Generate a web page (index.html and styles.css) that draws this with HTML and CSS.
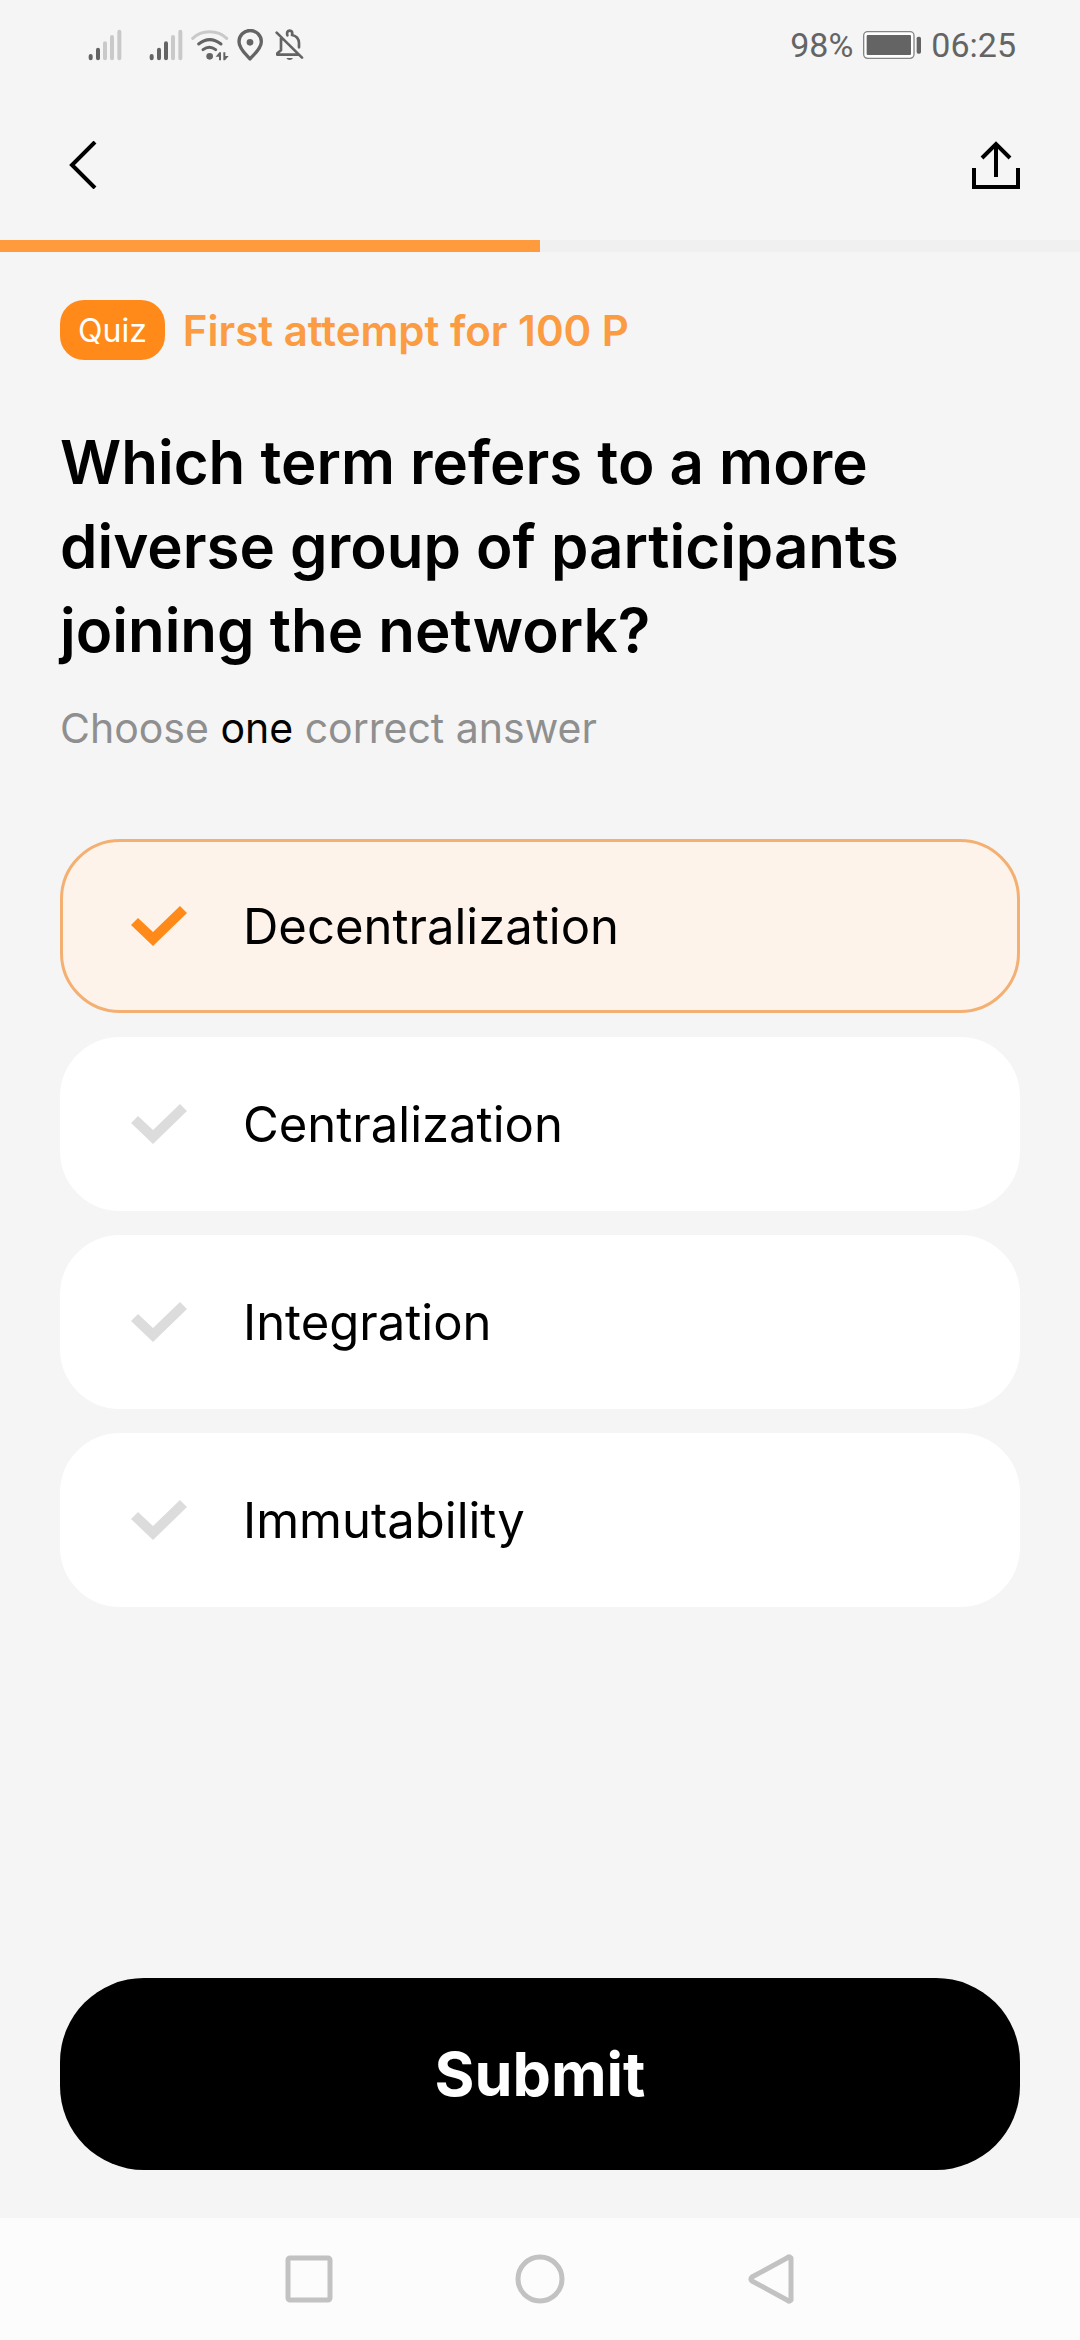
FILE: index.html
```html
<!DOCTYPE html>
<html lang="en">
<head>
<meta charset="utf-8">
<meta name="viewport" content="width=device-width, initial-scale=1">
<title>Quiz</title>
<link rel="stylesheet" href="styles.css">
</head>
<body>
<div class="status-bar">
  <div class="status-icons">
    <svg class="signal" width="34" height="32" viewBox="54 57 102 96" fill="none" stroke="#646464" stroke-width="12" stroke-linecap="round" aria-hidden="true"><path d="M62 138v7M84 119v26"/><path stroke="#c9c9c9" d="M105 100v45M126 81v64M148 65v80"/></svg>
    <svg class="signal" width="34" height="32" viewBox="237 57 102 96" fill="none" stroke="#646464" stroke-width="12" stroke-linecap="round" aria-hidden="true"><path d="M245 138v7M267 119v26M288 100v45"/><path stroke="#c9c9c9" d="M309 81v64M331 65v80"/></svg>
    <svg width="38" height="32" viewBox="363 57 114 96" fill="none" stroke="#646464" stroke-width="9" stroke-linecap="round" aria-hidden="true"><path stroke="#c9c9c9" d="M368 85Q388 65 419 65T470 85"/><path d="M386 102Q419 76 453 102M399 119Q418 105 437 119"/><circle cx="419" cy="139" r="10" fill="#646464" stroke="none"/><path fill="#646464" stroke="none" d="M437 140 448 127h5v24h-6v-11zM460 127h6v11h10l-11 13h-5z"/></svg>
    <svg width="26" height="32" viewBox="501 57 78 96" fill="none" stroke="#646464" stroke-width="10" stroke-linejoin="round" aria-hidden="true"><path d="M540 147C529 134 507 116 507 95a33 33 0 0 1 67 0C574 116 551 134 540 147z"/><circle cx="540" cy="97" r="10" fill="#646464" stroke="none"/></svg>
    <svg class="muted-bell" width="29" height="32" viewBox="613 57 87 96" fill="none" stroke="#646464" stroke-width="8" stroke-linejoin="round" stroke-linecap="round" aria-hidden="true"><path d="M618 68 694 143M631 84V121L620 130V134H682M650 76Q647 62 657 62 667 62 664 75 684 79 685 99V112"/><path fill="#646464" stroke="none" d="M647 144h20q-3 6-10 6t-10-6z"/></svg>
  </div>
  <div class="status-info">
    <span>98%</span>
    <svg width="58" height="28" viewBox="276 64 174 84" aria-hidden="true"><rect x="278" y="66" width="151" height="80" rx="12" fill="#fff" stroke="#858585" stroke-width="4"/><rect x="287" y="76" width="133" height="60" rx="3" fill="#646464"/><rect x="437" y="81" width="13" height="51" rx="5" fill="#646464"/></svg>
    <span>06:25</span>
  </div>
</div>

<header class="app-bar">
  <button class="icon-button" type="button" aria-label="Back">
    <svg width="48" height="48" viewBox="0 0 48 48" fill="none" stroke="#000" stroke-width="4"><path d="M35 1 12 24 35 47"/></svg>
  </button>
  <button class="icon-button" type="button" aria-label="Share">
    <svg width="48" height="48" viewBox="0 0 48 48" fill="none" stroke="#000" stroke-width="4"><path d="M2 27V46H46V27M24 36V3M10 17 24 3 38 17"/></svg>
  </button>
</header>
<progress class="progress" value="50" max="100" aria-label="Quiz progress"></progress>

<form class="quiz">
  <div class="meta">
    <span class="badge">Quiz</span>
    <span class="attempt">First attempt for 100 P</span>
  </div>
  <h1 class="question">Which term refers to a more diverse group of participants joining the network?</h1>
  <p class="hint">Choose <strong>one</strong> correct answer</p>
  <div class="options" role="radiogroup" aria-label="Answers">
    <label class="option"><input type="radio" name="answer" checked><span>Decentralization</span></label>
    <label class="option"><input type="radio" name="answer"><span>Centralization</span></label>
    <label class="option"><input type="radio" name="answer"><span>Integration</span></label>
    <label class="option"><input type="radio" name="answer"><span>Immutability</span></label>
  </div>
  <button class="submit" type="button">Submit</button>
</form>

<nav class="system-nav" aria-label="System">
  <button class="icon-button" type="button" aria-label="Recent apps">
    <svg width="50" height="50" viewBox="0 0 50 50" fill="none" stroke="#c2c2c2" stroke-width="5"><rect x="4" y="4" width="42" height="42" rx="2"/></svg>
  </button>
  <button class="icon-button" type="button" aria-label="Home">
    <svg width="50" height="50" viewBox="0 0 50 50" fill="none" stroke="#c2c2c2" stroke-width="5"><circle cx="25" cy="25" r="22"/></svg>
  </button>
  <button class="icon-button" type="button" aria-label="Back">
    <svg width="50" height="50" viewBox="0 0 50 50" fill="none" stroke="#c2c2c2" stroke-width="5" stroke-linejoin="round"><path d="M45 4V46Q43 48 41 46L6 27Q4 25 6 23L41 4Q43 2 45 4z"/></svg>
  </button>
</nav>
</body>
</html>
```
FILE: styles.css
```css
* {
  box-sizing: border-box;
}

body {
  display: flex;
  flex-direction: column;
  min-height: 100vh;
  margin: 0;
  background: #f5f5f5;
  color: #000;
  font-family: Inter, "Liberation Sans", sans-serif;
}

svg {
  display: block;
}

.icon-button {
  padding: 0;
  border: 0;
  background: none;
}

.status-bar {
  display: flex;
  align-items: center;
  justify-content: space-between;
  height: 90px;
  padding: 0 64px 0 88px;
  color: #646464;
  font-family: Roboto, sans-serif;
  font-size: 34px;
}

.status-icons {
  display: flex;
  align-items: center;
  gap: 8px;
}

.signal + .signal {
  margin-left: 19px;
}

.muted-bell {
  margin-left: 4px;
}

.status-info {
  display: flex;
  align-items: center;
  gap: 10px;
}

.app-bar {
  display: flex;
  align-items: center;
  justify-content: space-between;
  height: 150px;
  padding: 0 60px;
}

.progress {
  display: block;
  width: 100%;
  height: 12px;
  border: 0;
  appearance: none;
  background: #f0f0f0;
}

.progress::-webkit-progress-bar {
  background: #f0f0f0;
}

.progress::-webkit-progress-value {
  background: #ff9b3d;
}

.quiz {
  display: flex;
  flex: 1;
  flex-direction: column;
  padding: 48px 60px;
}

.meta {
  display: flex;
  align-items: center;
  gap: 18px;
}

.badge {
  padding: 2px 18px 0;
  border-radius: 24px;
  background: #ff8a1a;
  color: #fff;
  font-size: 32px;
  line-height: 58px;
}

.attempt {
  padding-top: 2px;
  color: #fb9b42;
  font-size: 42px;
  font-weight: 600;
  line-height: 58px;
}

.question {
  margin: 60px 0 0;
  font-size: 60px;
  font-weight: 600;
  line-height: 84px;
}

.hint {
  margin: 26px 0 0;
  color: #8f8f8f;
  font-size: 41px;
  line-height: 60px;
}

.hint strong {
  color: #000;
  font-weight: 400;
}

.options {
  display: grid;
  gap: 24px;
  margin-top: 81px;
}

.option {
  display: flex;
  align-items: center;
  gap: 56px;
  height: 174px;
  padding: 0 68px;
  border: 3px solid #fff;
  border-radius: 60px;
  background: #fff;
  font-size: 49px;
}

.option:has(:checked) {
  border-color: #f4b072;
  background: #fef3ea;
}

.option input {
  width: 56px;
  height: 40px;
  margin: 0;
  appearance: none;
  background: #dcdcdc;
  clip-path: polygon(0 19px, 7px 12px, 22px 26px, 49px 0, 56px 7px, 22px 40px);
}

.option input:checked {
  background: #ff8a1a;
}

.submit {
  height: 192px;
  margin-top: auto;
  border: 0;
  border-radius: 84px;
  background: #000;
  color: #fff;
  font: inherit;
  font-size: 61px;
  font-weight: 700;
}

.system-nav {
  display: flex;
  align-items: center;
  justify-content: center;
  gap: 181px;
  height: 122px;
  background: #fcfcfc;
}
```
